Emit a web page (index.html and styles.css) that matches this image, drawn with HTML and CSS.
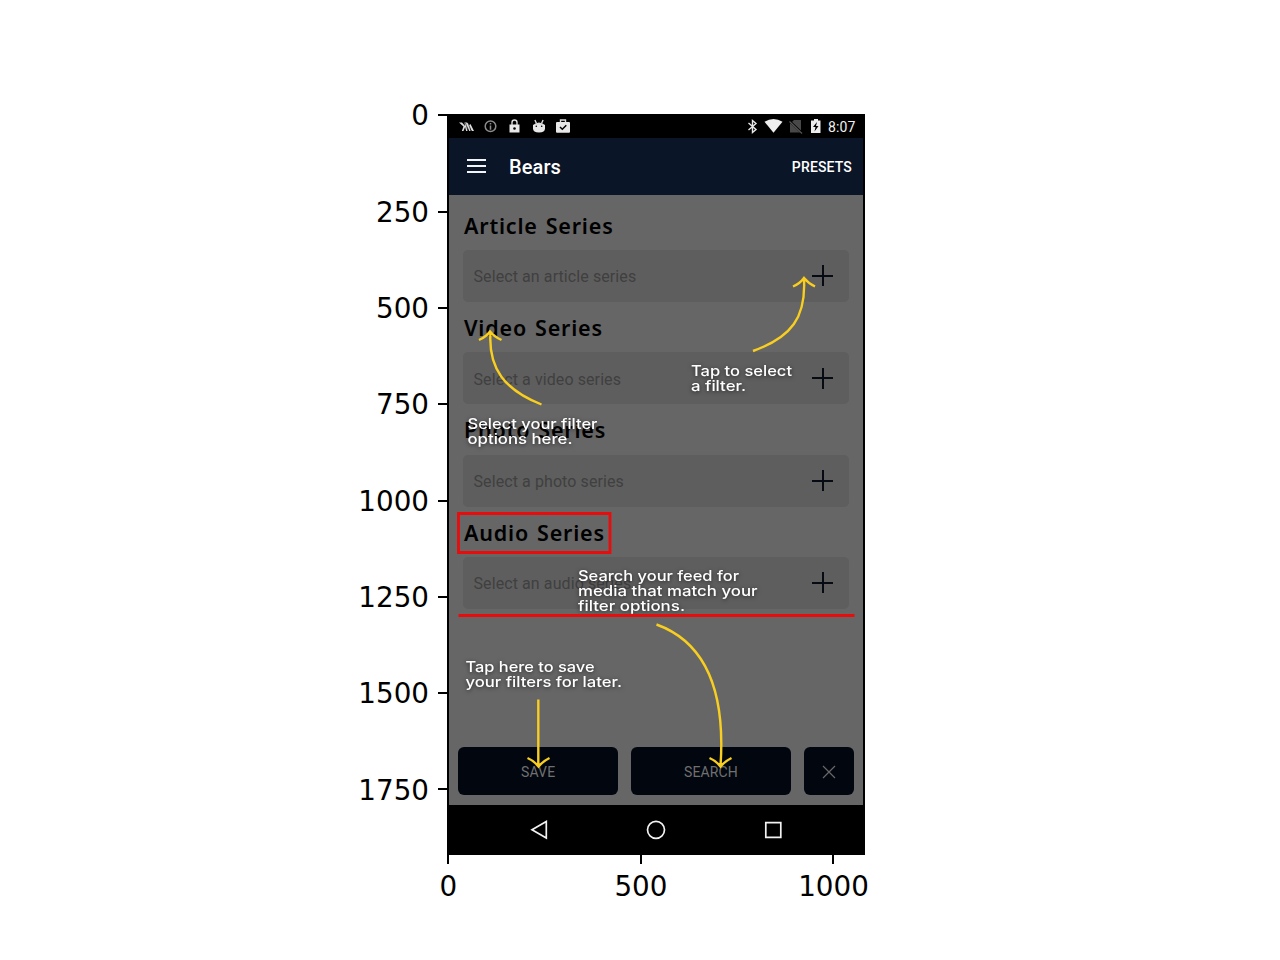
FILE: index.html
```
<!DOCTYPE html>
<html lang="en">
<head>
<meta charset="utf-8">
<title>Bears</title>
<link rel="stylesheet" href="styles.css">
</head>
<body>
<main class="figure">
  <div class="y-axis">
    <div class="y-tick"><span>0</span></div><div class="y-tick"><span>250</span></div><div class="y-tick"><span>500</span></div><div class="y-tick"><span>750</span></div>
    <div class="y-tick"><span>1000</span></div><div class="y-tick"><span>1250</span></div><div class="y-tick"><span>1500</span></div><div class="y-tick"><span>1750</span></div>
  </div>
  <div class="plot">
    <div class="phone">
      <div class="status">
        <svg class="status-left" width="120" height="20" viewBox="457 116 120 20">
          <path d="M459 122.500h3l3 3.500-.5-3.500h2.500l2.500 2.500 1-1 3.500 7h-2.200l-2-4 1 4h-1.600l-2-5 .5 5h-1.600l-1-4-1.600 4h-1.700l1.700-4.500z" fill="#dedede"/>
          <path d="M465.500 123l2.500 8M468.500 124l2.500 7" stroke="#000" stroke-width=".6"/>
          <g fill="#e8e8e8"><path d="M509.500 124.500h10v8h-10z"/><path d="M533 125h12v3.500q0 4-6 4t-6-4z"/><rect x="556" y="122" width="14" height="10.800" rx="1"/></g>
          <path d="M512 125v-2.500a2.500 2.500 0 0 1 5 0v2.500M560.500 122v-2h5v2M536.500 123.500l-1.600-3.500M541.500 123.500l1.600-3.500" fill="none" stroke="#ddd" stroke-width="1.400"/>
          <path d="M533 125q6-5 12 0z" fill="#ddd"/>
          <circle cx="514.500" cy="128.500" r="1.300"/><circle cx="536.300" cy="126.300" r=".8"/><circle cx="541.700" cy="126.300" r=".8"/>
          <path d="M560 127l2.300 2.300 4-4" fill="none" stroke="#000" stroke-width="1.500"/>
          <circle cx="490.500" cy="126.300" r="5.300" fill="none" stroke="#8c8c8c" stroke-width="1.500"/><path d="M490.500 123v1.500M490.500 125.500v4.200" stroke="#8c8c8c" stroke-width="1.500"/>
        </svg>
        <svg class="status-right" width="76" height="20" viewBox="747 116 76 20">
          <path d="M748.500 123l7.500 6.500-3.500 3v-12l3.500 3-7.500 6.500" fill="none" stroke="#e8e8e8" stroke-width="1.400"/>
          <path d="M764.500 121.800q9-5.500 18 0l-9 11z" fill="#eee"/>
          <path d="M790 124l4-4h7v12.500h-11z" fill="#484848"/><path d="M789 120.500l13 12.500" stroke="#000" stroke-width="2.400"/><path d="M789.500 121.500l12.500 12" stroke="#555" stroke-width="1.200"/>
          <path d="M811 120.500h3v-1.500h4v1.500h2.500v12.500h-9.500z" fill="#eee"/><path d="M817 122l-4 5h2.500l-1 4.500 4-5.500h-2.500z"/>
        </svg>
        <span class="clock">8:07</span>
      </div>
      <header class="appbar">
        <svg class="menu" width="20" height="16" viewBox="0 0 20 16"><path d="M0 2h19M0 8h19M0 14h19" stroke="#f2f4f7" stroke-width="2"/></svg>
        <h1 class="title">Bears</h1>
        <span class="presets">PRESETS</span>
      </header>
      <div class="content">
        <section class="series"><h2 class="heading">Article Series</h2><div class="field"><span>Select an article series</span><i class="plus"></i></div></section>
        <section class="series"><h2 class="heading">Video Series</h2><div class="field"><span>Select a video series</span><i class="plus"></i></div></section>
        <section class="series"><h2 class="heading">Photo Series</h2><div class="field"><span>Select a photo series</span><i class="plus"></i></div></section>
        <section class="series"><h2 class="heading">Audio Series</h2><div class="field"><span>Select an audio series</span><i class="plus"></i></div></section>
        <div class="actions">
          <div class="button">SAVE</div><div class="button">SEARCH</div>
          <div class="button close"><svg width="14" height="14" viewBox="0 0 14 14"><path d="M1 1l12 12M13 1L1 13" stroke="#686868" stroke-width="1.200"/></svg></div>
        </div>
      </div>
      <nav class="navbar">
        <svg width="414" height="48" viewBox="449 805 414 48" fill="none" stroke="#f2f2f2" stroke-width="1.700"><path d="M546.300 821.500v16.500l-14.300-8.200z"/><circle cx="656" cy="829.800" r="8.500"/><path d="M765.800 822.600h15v14.700h-15z"/></svg>
      </nav>
      <svg class="coach" width="418" height="741" viewBox="447 114 418 741">
        <g class="arrow">
          <path d="M753 351C792 337 806 317 804 279M793 286.500q7-3 11-8.500q4 5 11 8.500"/>
          <path d="M541.500 404.500C505 390 488 369 490.500 332M479 340q7-3 11-8.500q4 5 11.500 8.500"/>
          <path d="M656.500 624.500C702 641 726 686 720.500 766M709.500 758q7 3 11 8.500q4-5 11-8.500"/>
          <path d="M538.300 699.500V766M527.500 758q7 3 11 8.500q4-5 11-8.500"/>
        </g>
        <g class="tip">
          <text x="691" y="375.500" textLength="101" lengthAdjust="spacingAndGlyphs">Tap to select</text>
          <text x="691" y="390.800" textLength="55" lengthAdjust="spacingAndGlyphs">a filter.</text>
          <text x="467.500" y="428.800" textLength="130" lengthAdjust="spacingAndGlyphs">Select your filter</text>
          <text x="467.500" y="444.100" textLength="105" lengthAdjust="spacingAndGlyphs">options here.</text>
          <text x="578" y="580.600" textLength="161" lengthAdjust="spacingAndGlyphs">Search your feed for</text>
          <text x="578" y="595.600" textLength="179.500" lengthAdjust="spacingAndGlyphs">media that match your</text>
          <text x="578" y="610.900" textLength="107" lengthAdjust="spacingAndGlyphs">filter options.</text>
          <text x="465.500" y="671.800" textLength="129" lengthAdjust="spacingAndGlyphs">Tap here to save</text>
          <text x="465.500" y="687.100" textLength="156.500" lengthAdjust="spacingAndGlyphs">your filters for later.</text>
        </g>
        <g class="mark"><path d="M458.500 513.500h151.500v39h-151.500zM458.500 615.500h396"/></g>
      </svg>
    </div>
    <div class="x-axis"><div class="x-tick">0</div><div class="x-tick">500</div><div class="x-tick">1000</div></div>
  </div>
</main>
</body>
</html>
```
FILE: styles.css
```
* { box-sizing: border-box; }
body { margin: 0; width: 1280px; height: 960px; overflow: hidden; background: #fff; font-family: Roboto, sans-serif; }
.figure { display: flex; color: #000; }
.y-axis { width: 447px; padding-top: 67.200px; font: 27.78px/1 "DejaVu Sans", sans-serif; }
.y-tick { height: 96.300px; display: flex; align-items: center; justify-content: flex-end; gap: 9px; }
.y-tick span { padding-top: 2px; }
.y-tick::after { content: ""; width: 9px; height: 2px; background: #000; }
.plot { width: 418px; padding-top: 114px; }
.phone { position: relative; height: 741px; border: 2px solid #000; background: #000; display: flex; flex-direction: column; }
.status { height: 22px; display: flex; align-items: flex-start; padding: 0 7px 0 8px; color: #f0f0f0; }
.status-right { margin-left: auto; }
.clock { width: 32px; margin-left: 1px; padding-left: 4px; font-size: 14px; line-height: 22px; letter-spacing: .1px; }
.appbar { height: 57px; background: #0b1528; color: #fff; display: flex; align-items: center; padding: 0 11px 0 18px; }
.menu { margin-top: -1px; }
.title { margin: 1px 0 0 22px; font-size: 20px; font-weight: 500; letter-spacing: .1px; }
.presets { margin-left: auto; font-size: 14px; font-weight: 500; letter-spacing: .15px; }
.content { height: 610px; background: #666; padding: 4.700px 9px 10px; display: flex; flex-direction: column; }
.series { height: 102.300px; padding: 0 5px; }
.heading { margin: 0; height: 50.300px; line-height: 51px; padding-left: 1px; font-family: "Noto Sans", sans-serif; font-size: 21.500px; font-weight: 600; letter-spacing: .8px; word-spacing: 1.700px; white-space: nowrap; }
.field { height: 52px; border-radius: 5px; background: #5e5e5e; color: #404040; font-size: 16px; letter-spacing: .09px; display: flex; justify-content: space-between; align-items: center; padding: 2px 16px 0 10.500px; }
.plus { width: 21px; height: 21px; margin-top: -2px; background: linear-gradient(#050a13, #050a13) center / 21px 2px no-repeat, linear-gradient(#050a13, #050a13) center / 2px 21px no-repeat; }
.actions { margin-top: auto; display: flex; gap: 12.500px; height: 48px; }
.button { flex: 1; border-radius: 6px; background: #02060f; color: #707070; font-size: 14px; letter-spacing: .1px; display: flex; align-items: center; justify-content: center; padding-top: 1px; }
.close { flex: 0 0 50.500px; }
.navbar { height: 48px; }
.coach { position: absolute; left: -2px; top: -2px; }
.arrow { fill: none; stroke: #f8ce20; stroke-width: 2.400; }
.tip { font: 500 14.500px Inter, sans-serif; fill: #fff; filter: drop-shadow(0 1px 2px rgba(0,0,0,.6)); }
.mark { fill: none; stroke: #e80c0c; stroke-width: 2.800; }
.x-axis { display: flex; margin-left: -95px; width: 578px; font: 27.78px/1 "DejaVu Sans", sans-serif; }
.x-tick { flex: 0 0 192.600px; display: flex; flex-direction: column; align-items: center; gap: 9px; }
.x-tick::before { content: ""; width: 2px; height: 9px; background: #000; }
```
